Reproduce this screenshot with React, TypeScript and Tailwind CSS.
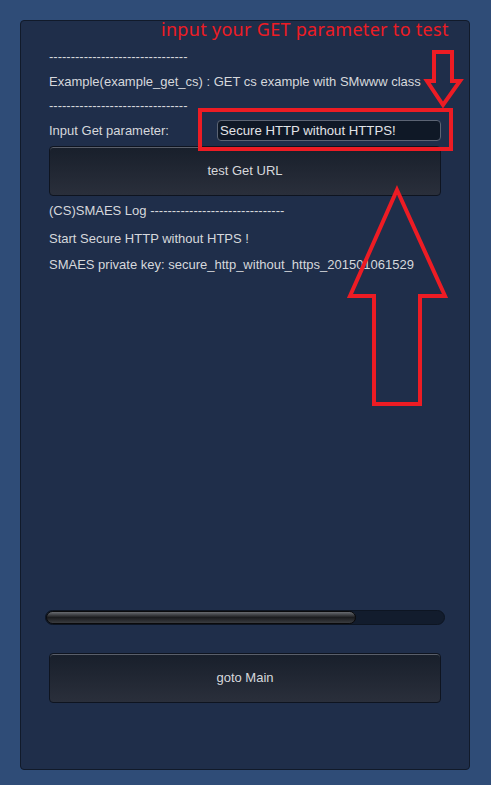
export default function App() {
  const line = 'h-[20px] leading-[20px] whitespace-nowrap'
  const btn =
    'ml-[28px] w-[392px] h-[50px] rounded-[4px] border border-[#0e1420] bg-gradient-to-b from-[#181f2b] to-[#2a2f3b] shadow-[inset_0_1px_0_#5a5f6a] flex items-center justify-center text-[13px] text-[#d6d8dc]'

  return (
    <div className="relative w-[491px] h-[785px] bg-[#2f4c77] pt-[20px] pl-[20px] font-['Liberation_Sans',Arial,sans-serif]">
      <div className="w-[450px] h-[750px] rounded-[4px] border border-[#111a2a] bg-[#1f2e4a] text-[13px] text-[#d6d8dc] flex flex-col">
        <div className="pl-[28px] pt-[26px] flex flex-col gap-[4.5px]">
          <div className={line}>--------------------------------</div>
          <div className={line}>Example(example_get_cs) : GET cs example with SMwww class</div>
          <div className={line}>--------------------------------</div>
        </div>

        {/* input row */}
        <div className="mt-[4px] pl-[28px] h-[21px] flex items-center">
          <div className="w-[168px] whitespace-nowrap">Input Get parameter:</div>
          <div className="w-[224px] h-[21px] rounded-[4px] border border-[#5c6474] bg-[#0f1826] pl-[2px] text-[13.2px] leading-[19px] text-[#e2e4e8] whitespace-nowrap">
            Secure HTTP without HTTPS!
          </div>
        </div>

        <div className="mt-[5px]">
          <div className={btn}>test Get URL</div>
        </div>

        {/* log */}
        <div className="pl-[28px] pt-[5px] flex flex-col">
          <div className={line}>(CS)SMAES Log -------------------------------</div>
          <div className={`${line} mt-[8px]`}>Start Secure HTTP without HTPS !</div>
          <div className={`${line} mt-[6px]`}>SMAES private key: secure_http_without_https_201501061529</div>
        </div>

        {/* progress */}
        <div className="mt-[335px] ml-[24px] w-[400px] h-[15px] rounded-full border border-[#0d1522] bg-[#121c2d] overflow-hidden">
          <div className="w-[310px] h-full rounded-full bg-gradient-to-b from-[#6a6d72] via-[#1b1c1f] to-[#3a3c40] border border-[#0a0a0c]" />
        </div>

        <div className="mt-[28px]">
          <div className={btn}>goto Main</div>
        </div>
      </div>

      {/* annotation */}
      <div className="absolute left-[161px] top-[17px] text-[18px] leading-[24px] text-[#ed1c24] font-['Noto_Sans',sans-serif] whitespace-nowrap tracking-[0.3px]">
        input your GET parameter to test
      </div>
      <svg className="absolute left-0 top-0" width="491" height="785" viewBox="0 0 491 785" fill="none">
        <rect x="200" y="110" width="251" height="39" stroke="#ed1c24" strokeWidth="4" />
        <polygon
          points="434,52 452,52 452,81 460,81 443,105 427,81 434,81"
          stroke="#ed1c24"
          strokeWidth="4"
          strokeLinejoin="miter"
        />
        <polygon
          points="397,190 445,296 420,296 420,404 374,404 374,296 350,296"
          stroke="#ed1c24"
          strokeWidth="4"
          strokeLinejoin="miter"
        />
      </svg>
    </div>
  )
}
